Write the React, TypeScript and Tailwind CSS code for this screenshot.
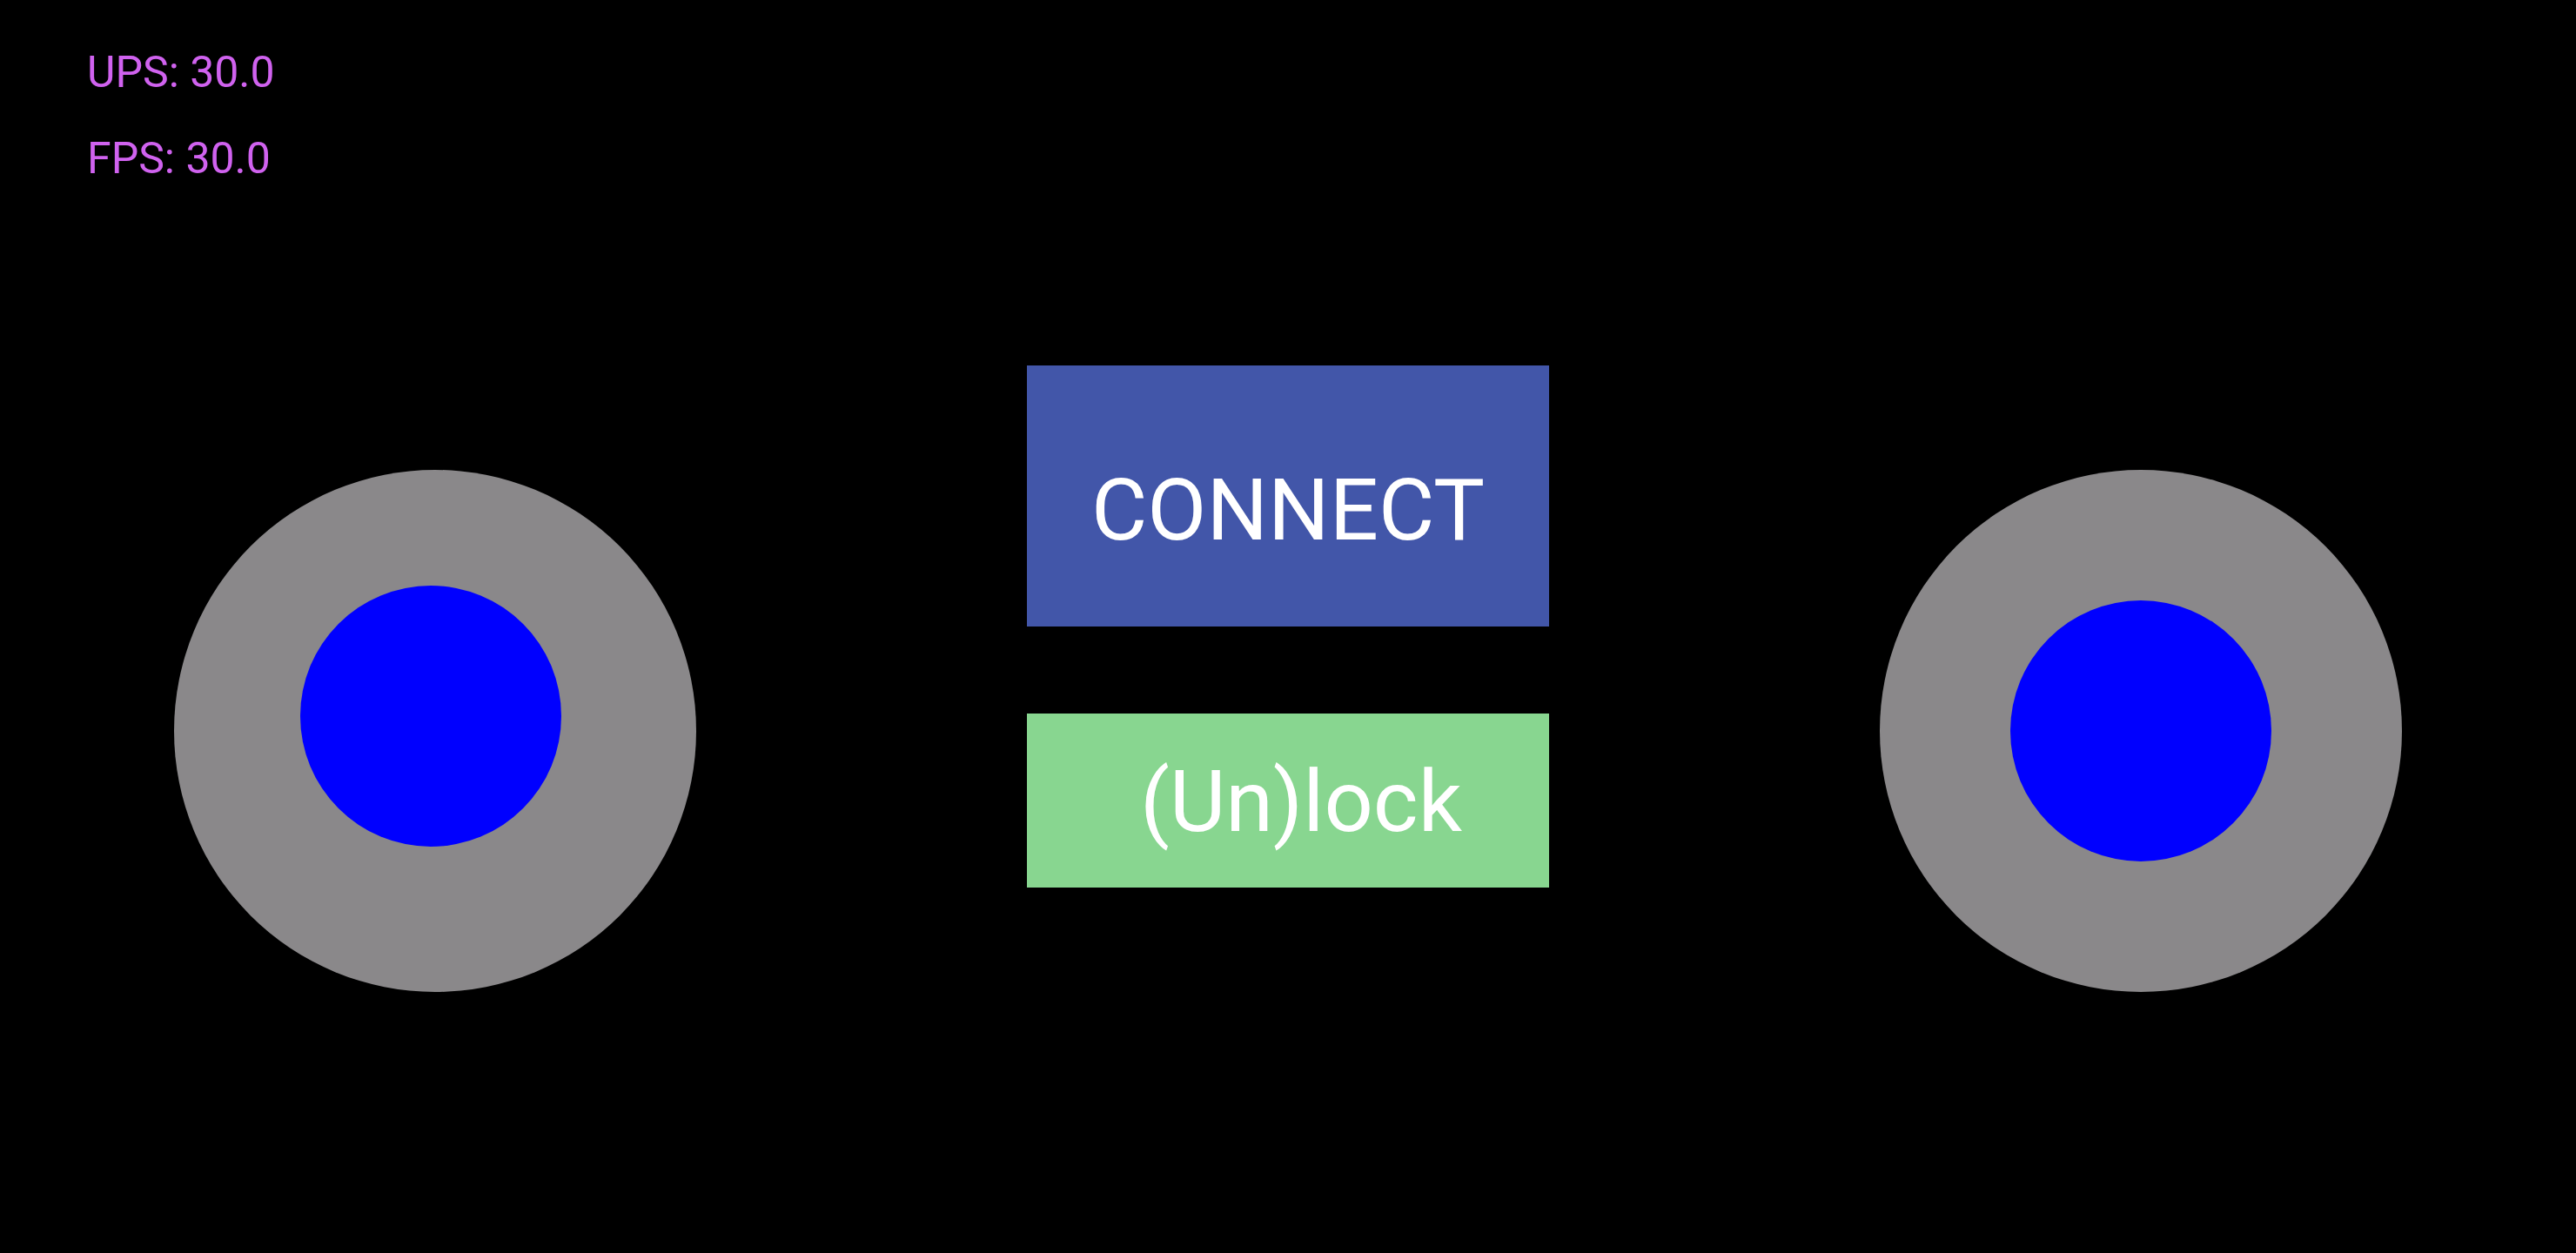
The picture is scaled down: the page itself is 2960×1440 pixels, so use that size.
import { useState } from 'react';

interface JoystickProps {
  knobClass?: string;
}

function Joystick({ knobClass = '' }: JoystickProps) {
  return (
    <div className="w-[600px] h-[600px] rounded-full bg-[#8a888a] flex items-center justify-center">
      <div className={`w-[300px] h-[300px] rounded-full bg-[#0000ff] ${knobClass}`} />
    </div>
  );
}

export default function App() {
  const [ups] = useState(30.0);
  const [fps] = useState(30.0);
  const [locked, setLocked] = useState(true);

  return (
    <div className="w-[2960px] h-[1440px] bg-black overflow-hidden flex flex-col font-['Roboto',sans-serif]">
      {/* Stats */}
      <div className="pl-[100px] pt-[53px] text-[50px] leading-[60px] text-[#d062ef]">
        <div>UPS: {ups.toFixed(1)}</div>
        <div className="mt-[39px]">FPS: {fps.toFixed(1)}</div>
      </div>

      <div className="flex justify-between items-start px-[200px] mt-[208px]">
        <div className="mt-[120px]">
          <Joystick knobClass="-translate-x-[5px] -translate-y-[17px]" />
        </div>

        <div className="flex flex-col gap-[100px]">
          <button className="w-[600px] h-[300px] bg-[#4256a9] text-white text-[99px] flex items-center justify-center pt-[32px]">
            CONNECT
          </button>
          <button
            onClick={() => setLocked(!locked)}
            className="w-[600px] h-[200px] bg-[#88d690] text-white text-[99px] flex items-center justify-center pl-[30px] pt-[2px]"
          >
            (Un)lock
          </button>
        </div>

        <div className="mt-[120px]">
          <Joystick />
        </div>
      </div>
    </div>
  );
}
